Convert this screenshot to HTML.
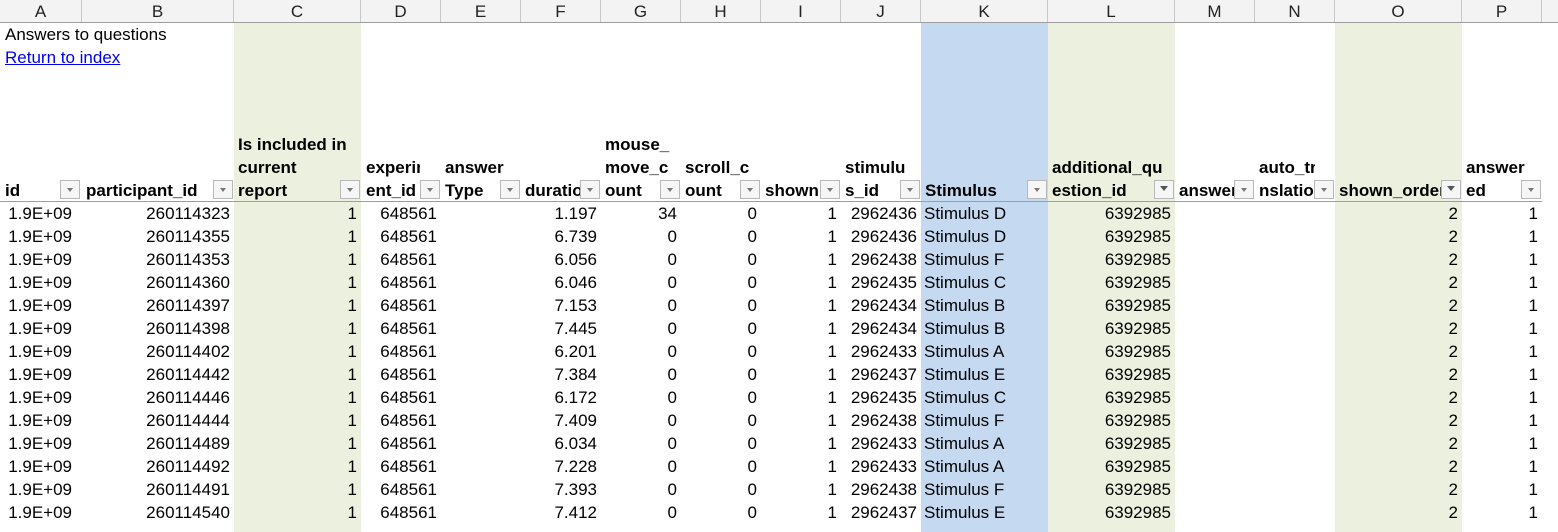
<!DOCTYPE html>
<html><head><meta charset="utf-8"><style>
*{margin:0;padding:0;box-sizing:border-box}
body{width:1558px;height:532px;overflow:hidden;background:#fff;font-family:"Liberation Sans",Arial,sans-serif;font-size:17px;color:#000;position:relative}
.hdr{position:absolute;top:0;left:0;width:1558px;height:23px;background:#f3f3f3;border-bottom:1px solid #9e9e9e}
.hdr div{position:absolute;top:0;height:22px;border-right:1px solid #c8c8c8;text-align:center;line-height:23px;font-size:17px;color:#222}
.band{position:absolute;top:23px;height:509px}
.g{background:#ebf1de}.b{background:#c5d9f1}
table{position:absolute;top:202px;left:0;border-collapse:collapse;table-layout:fixed;font-size:17px}
td{height:23px;padding:0 4px 0 3px;text-align:right;white-space:nowrap;overflow:hidden;line-height:23px}
td.l{text-align:left}
td.a{padding-right:9px}
.h{position:absolute;font-weight:bold;line-height:23px;white-space:nowrap;overflow:hidden;font-size:17px}
.f{position:absolute;top:180px;width:20px;height:19px;border:1px solid #b8b8b8;background:#f6f6f6}
.f:after{content:"";position:absolute;left:6px;top:7px;border-left:3px solid transparent;border-right:3px solid transparent;border-top:4px solid #777}
.f.t:after{left:5px;top:5px;border-left:4px solid transparent;border-right:4px solid transparent;border-top:5px solid #555}
.hl{position:absolute;left:0;top:201px;width:1542px;height:1px;background:#9e9e9e}
</style></head><body>
<div class="band g" style="left:234px;width:127px"></div>
<div class="band b" style="left:921px;width:127px"></div>
<div class="band g" style="left:1048px;width:127px"></div>
<div class="band g" style="left:1335px;width:127px"></div>
<div class="hdr">
<div style="left:0;width:82px">A</div><div style="left:82px;width:152px">B</div><div style="left:234px;width:127px">C</div><div style="left:361px;width:80px">D</div><div style="left:441px;width:80px">E</div><div style="left:521px;width:80px">F</div><div style="left:601px;width:80px">G</div><div style="left:681px;width:80px">H</div><div style="left:761px;width:80px">I</div><div style="left:841px;width:80px">J</div><div style="left:921px;width:127px">K</div><div style="left:1048px;width:127px">L</div><div style="left:1175px;width:80px">M</div><div style="left:1255px;width:80px">N</div><div style="left:1335px;width:127px">O</div><div style="left:1462px;width:80px">P</div>
</div>
<div style="position:absolute;left:5px;top:23px;line-height:23px">Answers to questions</div>
<div style="position:absolute;left:5px;top:46px;line-height:23px;color:#0000ee;text-decoration:underline">Return to index</div>
<div class="hl"></div>
<div class="h" style="left:5px;top:179px">id</div>
<div class="h" style="left:86px;top:179px">participant_id</div>
<div class="h" style="left:238px;top:133px">Is included in<br>current<br>report</div>
<div class="h" style="left:366px;top:156px;width:54px">experim<br>ent_id</div>
<div class="h" style="left:445px;top:156px">answer<br>Type</div>
<div class="h" style="left:525px;top:179px;width:56px">duration</div>
<div class="h" style="left:605px;top:133px;width:74px">mouse_<br>move_c<br>ount</div>
<div class="h" style="left:685px;top:156px">scroll_c<br>ount</div>
<div class="h" style="left:765px;top:179px;width:56px">shown</div>
<div class="h" style="left:845px;top:156px">stimulu<br>s_id</div>
<div class="h" style="left:925px;top:179px">Stimulus</div>
<div class="h" style="left:1052px;top:156px">additional_qu<br>estion_id</div>
<div class="h" style="left:1179px;top:179px;width:56px">answer</div>
<div class="h" style="left:1259px;top:156px;width:56px">auto_tra<br>nslation</div>
<div class="h" style="left:1339px;top:179px;width:103px">shown_order</div>
<div class="h" style="left:1466px;top:156px">answer<br>ed</div>
<div class="f" style="left:60px"></div><div class="f" style="left:213px"></div><div class="f" style="left:340px"></div><div class="f" style="left:420px"></div><div class="f" style="left:500px"></div><div class="f" style="left:580px"></div><div class="f" style="left:660px"></div><div class="f" style="left:740px"></div><div class="f" style="left:820px"></div><div class="f" style="left:900px"></div><div class="f" style="left:1027px"></div><div class="f t" style="left:1154px"></div><div class="f" style="left:1234px"></div><div class="f" style="left:1314px"></div><div class="f t" style="left:1441px"></div><div class="f" style="left:1521px"></div>
<table>
<colgroup><col style="width:81px"><col style="width:153px"><col style="width:127px"><col style="width:80px"><col style="width:80px"><col style="width:80px"><col style="width:80px"><col style="width:80px"><col style="width:80px"><col style="width:80px"><col style="width:127px"><col style="width:127px"><col style="width:80px"><col style="width:80px"><col style="width:127px"><col style="width:80px"></colgroup>
<tr><td class="a">1.9E+09</td><td>260114323</td><td>1</td><td>648561</td><td></td><td>1.197</td><td>34</td><td>0</td><td>1</td><td>2962436</td><td class="l">Stimulus D</td><td>6392985</td><td></td><td></td><td>2</td><td>1</td></tr>
<tr><td class="a">1.9E+09</td><td>260114355</td><td>1</td><td>648561</td><td></td><td>6.739</td><td>0</td><td>0</td><td>1</td><td>2962436</td><td class="l">Stimulus D</td><td>6392985</td><td></td><td></td><td>2</td><td>1</td></tr>
<tr><td class="a">1.9E+09</td><td>260114353</td><td>1</td><td>648561</td><td></td><td>6.056</td><td>0</td><td>0</td><td>1</td><td>2962438</td><td class="l">Stimulus F</td><td>6392985</td><td></td><td></td><td>2</td><td>1</td></tr>
<tr><td class="a">1.9E+09</td><td>260114360</td><td>1</td><td>648561</td><td></td><td>6.046</td><td>0</td><td>0</td><td>1</td><td>2962435</td><td class="l">Stimulus C</td><td>6392985</td><td></td><td></td><td>2</td><td>1</td></tr>
<tr><td class="a">1.9E+09</td><td>260114397</td><td>1</td><td>648561</td><td></td><td>7.153</td><td>0</td><td>0</td><td>1</td><td>2962434</td><td class="l">Stimulus B</td><td>6392985</td><td></td><td></td><td>2</td><td>1</td></tr>
<tr><td class="a">1.9E+09</td><td>260114398</td><td>1</td><td>648561</td><td></td><td>7.445</td><td>0</td><td>0</td><td>1</td><td>2962434</td><td class="l">Stimulus B</td><td>6392985</td><td></td><td></td><td>2</td><td>1</td></tr>
<tr><td class="a">1.9E+09</td><td>260114402</td><td>1</td><td>648561</td><td></td><td>6.201</td><td>0</td><td>0</td><td>1</td><td>2962433</td><td class="l">Stimulus A</td><td>6392985</td><td></td><td></td><td>2</td><td>1</td></tr>
<tr><td class="a">1.9E+09</td><td>260114442</td><td>1</td><td>648561</td><td></td><td>7.384</td><td>0</td><td>0</td><td>1</td><td>2962437</td><td class="l">Stimulus E</td><td>6392985</td><td></td><td></td><td>2</td><td>1</td></tr>
<tr><td class="a">1.9E+09</td><td>260114446</td><td>1</td><td>648561</td><td></td><td>6.172</td><td>0</td><td>0</td><td>1</td><td>2962435</td><td class="l">Stimulus C</td><td>6392985</td><td></td><td></td><td>2</td><td>1</td></tr>
<tr><td class="a">1.9E+09</td><td>260114444</td><td>1</td><td>648561</td><td></td><td>7.409</td><td>0</td><td>0</td><td>1</td><td>2962438</td><td class="l">Stimulus F</td><td>6392985</td><td></td><td></td><td>2</td><td>1</td></tr>
<tr><td class="a">1.9E+09</td><td>260114489</td><td>1</td><td>648561</td><td></td><td>6.034</td><td>0</td><td>0</td><td>1</td><td>2962433</td><td class="l">Stimulus A</td><td>6392985</td><td></td><td></td><td>2</td><td>1</td></tr>
<tr><td class="a">1.9E+09</td><td>260114492</td><td>1</td><td>648561</td><td></td><td>7.228</td><td>0</td><td>0</td><td>1</td><td>2962433</td><td class="l">Stimulus A</td><td>6392985</td><td></td><td></td><td>2</td><td>1</td></tr>
<tr><td class="a">1.9E+09</td><td>260114491</td><td>1</td><td>648561</td><td></td><td>7.393</td><td>0</td><td>0</td><td>1</td><td>2962438</td><td class="l">Stimulus F</td><td>6392985</td><td></td><td></td><td>2</td><td>1</td></tr>
<tr><td class="a">1.9E+09</td><td>260114540</td><td>1</td><td>648561</td><td></td><td>7.412</td><td>0</td><td>0</td><td>1</td><td>2962437</td><td class="l">Stimulus E</td><td>6392985</td><td></td><td></td><td>2</td><td>1</td></tr>
</table>
</body></html>
